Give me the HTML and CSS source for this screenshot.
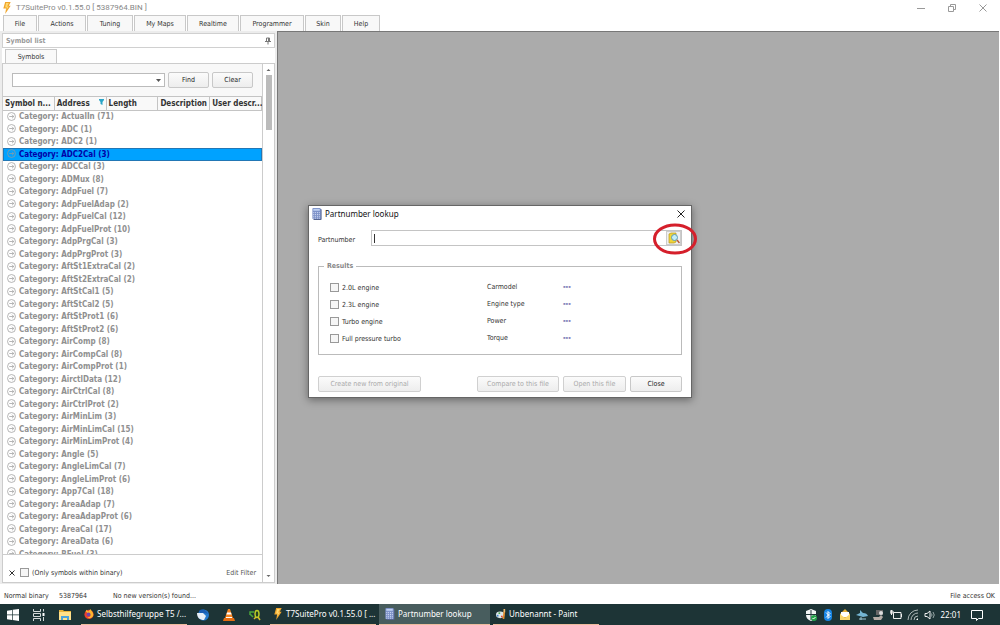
FILE: index.html
```
<!DOCTYPE html>
<html lang="en">
<head>
<meta charset="utf-8">
<title>T7SuitePro</title>
<link rel="stylesheet" href="styles.css">
</head>
<body>
<svg class="defs" aria-hidden="true">
  <symbol id="bolt" viewBox="0 0 10 13"><path d="M3 0h6L7 4h2L3 13l1-6H1z" fill="#f0a52c"/><path d="M4 1h3L5 5h2L4 9l1-3H3z" fill="#ffd970"/></symbol>
  <symbol id="calc" viewBox="0 0 10 13"><rect x="1" y="1" width="9" height="12" rx="1" fill="#55648f"/><rect width="9" height="12" rx="1" fill="#7d91c8"/><path d="M1 1h7v2H1z" fill="#bdd0f3"/><path d="M1 5h7M1 7h7M1 9h7M1 11h7" stroke="#dce5fa" stroke-dasharray="1 1"/></symbol>
</svg>
<div class="app">
  <header class="titlebar">
    <svg class="app-icon"><use href="#bolt"/></svg>
    <span class="title">T7SuitePro v0.1.55.0 [ 5387964.BIN ]</span>
    <div class="winbtns">
      <button aria-label="Minimize"><svg viewBox="0 0 10 10"><path d="M1 5.500h8"/></svg></button>
      <button aria-label="Restore"><svg viewBox="0 0 10 10"><path d="M1.500 3.500h5v5h-5zM3.500 3.500v-2h5v5h-2"/></svg></button>
      <button aria-label="Close window"><svg viewBox="0 0 10 10"><path d="M1.500 1.500l7 7M8.500 1.500l-7 7"/></svg></button>
    </div>
  </header>
  <nav class="menubar">
    <button class="m-file">File</button><button class="m-actions">Actions</button><button class="m-tuning">Tuning</button><button class="m-wide">My Maps</button><button class="m-wide">Realtime</button><button class="m-prog">Programmer</button><button class="m-skin">Skin</button><button class="m-help">Help</button>
  </nav>
  <main class="main">
    <aside class="panel">
      <div class="panel-head"><span>Symbol list</span><svg viewBox="0 0 6 8"><path d="M0 4.500h6M3 4.500v3M1.500 4v-3h3v3M3.500 1v3" fill="none" stroke="#777"/></svg></div>
      <div class="tabs"><button>Symbols</button></div>
      <div class="panel-body">
        <div class="content">
          <div class="search">
            <div class="combo"><input aria-label="Search symbols"><button aria-label="Show history"><svg viewBox="0 0 5 3"><path d="M0 0h5L2.500 3z" fill="#555"/></svg></button></div>
            <button class="btn">Find</button><button class="btn">Clear</button>
          </div>
          <div class="grid">
            <table>
              <thead><tr><th>Symbol n...</th><th>Address<svg class="funnel" viewBox="0 0 5 6"><path d="M0 0h5v1L3.500 3v3L1.500 5V3L0 1z" fill="#2aa5c8"/></svg></th><th>Length</th><th>Description</th><th>User descr...</th></tr></thead>
              <tbody>
                <tr><td colspan="5">Category: ActualIn (71)</td></tr>
                <tr><td colspan="5">Category: ADC (1)</td></tr>
                <tr><td colspan="5">Category: ADC2 (1)</td></tr>
                <tr class="selected"><td colspan="5">Category: ADC2Cal (3)</td></tr>
                <tr><td colspan="5">Category: ADCCal (3)</td></tr>
                <tr><td colspan="5">Category: ADMux (8)</td></tr>
                <tr><td colspan="5">Category: AdpFuel (7)</td></tr>
                <tr><td colspan="5">Category: AdpFuelAdap (2)</td></tr>
                <tr><td colspan="5">Category: AdpFuelCal (12)</td></tr>
                <tr><td colspan="5">Category: AdpFuelProt (10)</td></tr>
                <tr><td colspan="5">Category: AdpPrgCal (3)</td></tr>
                <tr><td colspan="5">Category: AdpPrgProt (3)</td></tr>
                <tr><td colspan="5">Category: AftSt1ExtraCal (2)</td></tr>
                <tr><td colspan="5">Category: AftSt2ExtraCal (2)</td></tr>
                <tr><td colspan="5">Category: AftStCal1 (5)</td></tr>
                <tr><td colspan="5">Category: AftStCal2 (5)</td></tr>
                <tr><td colspan="5">Category: AftStProt1 (6)</td></tr>
                <tr><td colspan="5">Category: AftStProt2 (6)</td></tr>
                <tr><td colspan="5">Category: AirComp (8)</td></tr>
                <tr><td colspan="5">Category: AirCompCal (8)</td></tr>
                <tr><td colspan="5">Category: AirCompProt (1)</td></tr>
                <tr><td colspan="5">Category: AirctlData (12)</td></tr>
                <tr><td colspan="5">Category: AirCtrlCal (8)</td></tr>
                <tr><td colspan="5">Category: AirCtrlProt (2)</td></tr>
                <tr><td colspan="5">Category: AirMinLim (3)</td></tr>
                <tr><td colspan="5">Category: AirMinLimCal (15)</td></tr>
                <tr><td colspan="5">Category: AirMinLimProt (4)</td></tr>
                <tr><td colspan="5">Category: Angle (5)</td></tr>
                <tr><td colspan="5">Category: AngleLimCal (7)</td></tr>
                <tr><td colspan="5">Category: AngleLimProt (6)</td></tr>
                <tr><td colspan="5">Category: App7Cal (18)</td></tr>
                <tr><td colspan="5">Category: AreaAdap (7)</td></tr>
                <tr><td colspan="5">Category: AreaAdapProt (6)</td></tr>
                <tr><td colspan="5">Category: AreaCal (17)</td></tr>
                <tr><td colspan="5">Category: AreaData (6)</td></tr>
                <tr><td colspan="5">Category: BFuel (3)</td></tr>
              </tbody>
            </table>
          </div>
          <div class="filter">
            <button class="plain" aria-label="Clear filter"><svg viewBox="0 0 6 6"><path d="M.5.5l5 5M5.500.5l-5 5" stroke="#333"/></svg></button>
            <label><input type="checkbox">(Only symbols within binary)</label>
            <button class="plain edit">Edit Filter</button>
          </div>
        </div>
        <div class="scroll"><svg viewBox="0 0 5 3"><path d="M.5 3h4L2.500 1z" fill="#666"/></svg><i></i><svg viewBox="0 0 5 3"><path d="M.5 0h4L2.500 2z" fill="#666"/></svg></div>
      </div>
    </aside>
    <section class="workspace"></section>
  </main>
  <footer class="status"><span class="bin">Normal binary</span><span class="num">5387964</span><span>No new version(s) found...</span><span class="access">File access OK</span></footer>
  <nav class="taskbar">
    <button class="ico" aria-label="Start"><svg viewBox="0 0 12 12"><path d="M0 1.700l5-.8v4.700H0zM5.700.8L12 0v5.600H5.700zM0 6.300h5V11l-5-.7zM5.700 6.300H12V12l-6.300-.9z" fill="#fff"/></svg></button>
    <button class="ico" aria-label="Task view"><svg viewBox="0 0 12 12"><path d="M.5 0v2.500h7V0M.5 4.500h7v3h-7zM.5 12V9.500h7V12M10.500 0v2.500M10.500 8v4" fill="none" stroke="#d5dada"/><path d="M9.500 4h2v3h-2z" fill="#fff"/></svg></button>
    <button class="ico" aria-label="Explorer"><svg viewBox="0 0 12 12"><path d="M0 1h4l1 1h7v9H0z" fill="#e8b33c"/><path d="M0 3h12v8H0z" fill="#ffe08a"/><path d="M2 11V7h8v4H8V9H4v2z" fill="#4ba3dc"/></svg></button>
    <button class="task firefox"><svg viewBox="0 0 12 12"><circle cx="6" cy="6.500" r="5.500" fill="#e9412f"/><path d="M2 3l1-2 2 2c2-2 2-2 3-3 0 2 4 4 3 8-1 3-5 4-7 2 4 0 5-3 2-4z" fill="#ffb52e"/><circle cx="5.500" cy="6.500" r="2.300" fill="#7444a8"/></svg><span>Selbsthilfegruppe T5 /...</span></button>
    <button class="ico" aria-label="Thunderbird"><svg viewBox="0 0 12 12"><circle cx="6.500" cy="6" r="5.500" fill="#2378cd"/><path d="M0 4l6 0 3 3-2 4c-4 0-7-2-7-7z" fill="#e6eef7"/><path d="M2 2c3-3 8-1 9 3L8 4 3 4z" fill="#1a5db3"/></svg></button>
    <button class="ico" aria-label="VLC"><svg viewBox="0 0 12 12"><path d="M5 0h2l3 9H2z" fill="#f58220"/><path d="M4 3.500h4l.6 2H3.400z" fill="#fff"/><path d="M1 9h10l1 3H0z" fill="#e56d11"/><path d="M3 8.500h6" stroke="#fff"/></svg></button>
    <button class="ico" aria-label="Search tool"><svg viewBox="0 0 12 12"><path d="M1 6V3h4M1 5l3 3" fill="none" stroke="#4aa53a" stroke-width="1.500"/><ellipse cx="8" cy="5" rx="2" ry="3.500" fill="#263f21" stroke="#b8ca27" stroke-width="1.500"/><path d="M5 10l2-2M9 8l2 3" stroke="#d5bf2b" stroke-width="1.500"/></svg></button>
    <button class="task suite"><svg><use href="#bolt"/></svg><span>T7SuitePro v0.1.55.0 [ ...</span></button>
    <button class="task active"><svg><use href="#calc"/></svg><span>Partnumber lookup</span></button>
    <button class="task"><svg viewBox="0 0 12 12"><ellipse cx="5" cy="7" rx="5" ry="4" fill="#dce6e9"/><path d="M1 7h2v2H1z" fill="#3a86cc"/><path d="M3 4h2v2H3z" fill="#46a450"/><path d="M6 8h2v2H6z" fill="#e2463a"/><path d="M9 3h2l-1 9H8z" fill="#e58b28"/><path d="M9 0h2v4H9z" fill="#f2bb70"/></svg><span>Unbenannt - Paint</span></button>
    <div class="tray">
      <svg viewBox="0 0 12 12"><path d="M1 2l5-2 5 2v4c0 3-2 5-5 6-3-1-5-3-5-6z" fill="#f2f5f5"/><path d="M6 1v10M1 5.500h10" stroke="#203738"/><circle cx="9" cy="9" r="3" fill="#23a34a"/><path d="M7.500 9l1 1 2-2" fill="none" stroke="#fff"/></svg>
      <svg viewBox="0 0 12 12"><rect x="2" width="8" height="12" rx="4" fill="#1685e5"/><path d="M4 3.500l4 4-2 2v-7l2 2-4 4" fill="none" stroke="#fff"/></svg>
      <svg viewBox="0 0 12 12"><path d="M1 5l5-5 5 5v6H1z" fill="#e4ae35"/><path d="M2 3h8v5H2z" fill="#fff"/><path d="M1 5l5 4 5-4v6H1z" fill="#f9d66b"/></svg>
      <svg viewBox="0 0 12 12"><path d="M0 6l4-2V1l3 3c3 0 4 1 5 3L7 8z" fill="#74b5d2"/><path d="M3 10h7M5 8v3" stroke="#9fc8d6"/></svg>
      <svg viewBox="0 0 12 12"><path d="M3 1h7v5H3z" fill="#666"/><circle cx="8" cy="4" r="2" fill="#ddd"/><path d="M0 8h6l2-2 2 2-2 3H1z" fill="#b5aca5"/></svg>
      <svg viewBox="0 0 12 12"><path d="M3.500 3.500H11v6H3.500zM11.500 5v3M1.500 1v5M0 2h3v2H0z" fill="none" stroke="#eee"/></svg>
      <svg viewBox="0 0 12 12"><path d="M1 11A10 10 0 0111 1M4 11a7 7 0 017-7M7 11a4 4 0 014-4" fill="none" stroke="#aeb8b8"/><path d="M9 11l2-2v2z" fill="#fff"/></svg>
      <svg viewBox="0 0 12 12"><path d="M1 4.500h2L6 2v8L3 7.500H1z" fill="none" stroke="#eee"/><path d="M7.500 4.500q1 1.500 0 3M9 3q2.500 3 0 6" fill="none" stroke="#99a8a8"/></svg>
      <time>22:01</time>
      <svg class="note" viewBox="0 0 12 12"><path d="M.5 1.500h11v8h-4l-2 2v-2h-5z" fill="none" stroke="#fff"/></svg>
    </div>
  </nav>
  <div class="dialog" role="dialog" aria-labelledby="dlg">
    <div class="dlg-head"><svg class="calc"><use href="#calc"/></svg><h1 id="dlg">Partnumber lookup</h1><button class="plain" aria-label="Close dialog"><svg viewBox="0 0 8 8"><path d="M.5.5l7 7M7.500.5l-7 7" stroke="#222"/></svg></button></div>
    <div class="dlg-body">
      <div class="field"><label for="part">Partnumber</label>
        <div class="entry"><i class="caret"></i><input id="part">
          <button class="look" aria-label="Look up"><svg viewBox="0 0 12 12"><path d="M1 2l2-1h5v9l-2 1H1z" fill="#f0d43a" stroke="#b8981c" stroke-width=".7"/><circle cx="6.500" cy="5.500" r="3" fill="#c3edf7" stroke="#5c9bb2"/><path d="M9 8l2.500 3" stroke="#ba5a3b" stroke-width="1.500"/></svg></button>
          <svg class="ring" viewBox="0 0 46 34"><ellipse cx="23" cy="17" rx="20.500" ry="14" fill="none" stroke="#d51f2b" stroke-width="3"/></svg>
        </div>
      </div>
      <fieldset><legend>Results</legend>
        <div class="results">
          <div class="checks"><label><input type="checkbox">2.0L engine</label><label><input type="checkbox">2.3L engine</label><label><input type="checkbox">Turbo engine</label><label><input type="checkbox">Full pressure turbo</label></div>
          <dl><dt>Carmodel</dt><dd>---</dd><dt>Engine type</dt><dd>---</dd><dt>Power</dt><dd>---</dd><dt>Torque</dt><dd>---</dd></dl>
        </div>
      </fieldset>
      <div class="actions"><button class="btn create" disabled>Create new from original</button><button class="btn compare" disabled>Compare to this file</button><button class="btn open" disabled>Open this file</button><button class="btn close">Close</button></div>
    </div>
  </div>
</div>
</body>
</html>
```
FILE: styles.css
```
* { box-sizing: border-box; }
body { margin: 0; background: #fff; color: #333; font: 7px/12px "DejaVu Sans Condensed", "DejaVu Sans", sans-serif; }
button, input { font: inherit; color: inherit; padding: 0; border: 0; background: none; }
input { min-width: 0; outline: 0; }
svg { flex: none; }
.defs { display: none; }
.app { position: relative; display: flex; flex-direction: column; height: 100vh; overflow: hidden; }

.titlebar { display: flex; align-items: center; height: 15px; padding: 0 12px 0 2px; color: #888; font: 8px/15px Roboto, sans-serif; }
.app-icon { width: 10px; height: 12px; margin-right: 4px; }
.winbtns { display: flex; gap: 21px; margin-left: auto; }
.winbtns button { display: flex; }
.winbtns svg { width: 10px; height: 10px; fill: none; stroke: #999; }

.menubar { display: flex; height: 16px; padding: 0 3px; gap: 1px; }
.menubar button { border: 1px solid #c8c8c8; border-bottom: 0; background: #f8f8f8; }
.m-file { width: 34px; }
.m-actions { width: 48px; }
.m-tuning { width: 46px; }
.m-wide { width: 52px; }
.m-prog { width: 64px; }
.m-skin { width: 36px; }
.m-help { width: 38px; }

.main { display: flex; flex: 1; min-height: 0; padding-right: 1px; }
.workspace { flex: 1; background: #ababab; border: solid #777; border-width: 1px 0 0 1px; }
.panel { display: flex; flex-direction: column; width: 277px; padding: 2px 2px 1px; background: #ececec; }
.panel-head { display: flex; justify-content: space-between; align-items: center; height: 15px; padding: 0 3px; border: 1px solid #d0d0d0; background: #fff; color: #999; }
.panel-head svg { width: 6px; height: 8px; }
.panel-head, table, legend { font-weight: bold; }
.tabs { height: 15px; padding: 1px 3px 0; background: #fff; }
.tabs button { display: block; width: 52px; height: 14px; border: 1px solid #c8c8c8; border-bottom: 0; background: #f9f9f9; }
.panel-body { display: flex; flex: 1; min-height: 0; border: 1px solid #ccc; background: #fff; }
.content { display: flex; flex-direction: column; flex: 1; min-width: 0; border-right: 1px solid #ccc; }
.search { display: flex; gap: 3px; height: 32px; padding: 8px 9px; background: #f8f8f8; }
.search .btn { width: 41px; }
.combo { display: flex; flex: 1; height: 14px; margin-top: 1px; border: 1px solid #bbb; background: #fff; }
.combo input { flex: 1; }
.combo button { display: flex; align-items: center; width: 8px; }
.combo button svg { width: 5px; height: 3px; }
.btn { height: 16px; border: 1px solid #c8c8c8; border-radius: 2px; background: linear-gradient(#fbfbfb, #ededed); color: #222; }
.btn:disabled { color: #aaa; border-color: #d0d0d0; }

.grid { flex: 1; min-height: 0; overflow: hidden; }
table { width: 100%; table-layout: fixed; border-spacing: 0; font-size: 8px; }
th { height: 15px; padding: 0 0 0 2px; border: solid #c4c4c4; border-width: 1px 1px 1px 0; background: #f9f9f9; color: #333; text-align: left; white-space: nowrap; line-height: 12px; }
.funnel { float: right; width: 5px; height: 6px; margin: 1px 2px 0; }
td { height: 12px; padding: 0 0 0 16px; line-height: 10px; color: #909090; background: url("data:image/svg+xml,%3Csvg xmlns='http://www.w3.org/2000/svg' viewBox='0 0 10 10' fill='none' stroke='%23999'%3E%3Ccircle cx='5' cy='5' r='4.400' stroke-width='.8'/%3E%3Cpath d='M2.500 5h5M5.500 3l2 2-2 2' stroke-width='.8'/%3E%3C/svg%3E") 4px 1px / 9px 9px no-repeat; }
tr:nth-child(even) td { height: 13px; }
.selected td { border: 1px solid #2277b5; padding-left: 15px; background-color: #00a2ff; background-position: 3px 0; color: #0000a8; }
.filter { display: flex; align-items: center; height: 28px; padding: 8px 6px 0; border-top: 1px solid #ccc; }
.filter label { margin-left: 5px; }
label { display: flex; align-items: center; gap: 3px; white-space: nowrap; }
input[type="checkbox"] { appearance: none; width: 9px; height: 9px; margin: 0; border: 1px solid #999; background: #f6f6f6; }
.plain { display: flex; }
.plain svg { width: 6px; height: 6px; }
.edit { margin-left: auto; color: #555; }
.scroll { display: flex; flex-direction: column; align-items: center; width: 11px; padding: 4px 0; }
.scroll svg { width: 5px; height: 3px; }
.scroll i { width: 6px; height: 55px; margin: 4px 0 auto; background: #bbb; }

.status { display: flex; align-items: center; height: 20px; padding: 3px 5px 0 4px; }
.bin { width: 55px; }
.num { width: 54px; }
.access { margin-left: auto; }

.taskbar { display: flex; height: 21px; background: #1d3436; color: #fff; font: 8px/20px "Noto Sans", sans-serif; }
.ico { display: flex; justify-content: center; align-items: center; width: 26px; }
.ico svg { width: 12px; height: 12px; }
.task { display: flex; align-items: center; gap: 3px; width: 106px; margin-right: 3px; padding: 0 3px; border-bottom: 1px solid #eebc9e; white-space: nowrap; }
.task svg { width: 10px; height: 12px; }
.task.firefox { margin-left: 3px; }
.task.suite { margin-left: 2px; }
.task.active { width: 111px; padding: 0 6px; background: #485d5e; }
.tray { display: flex; align-items: center; gap: 5px; margin-left: auto; padding-right: 17px; }
.tray svg { width: 12px; height: 12px; }
.tray .note { margin-left: 5px; }

.dialog { position: absolute; left: calc(50% - 192px); top: 205px; width: 384px; border: 1px solid #666; background: #fff; box-shadow: 0 2px 8px rgba(0, 0, 0, .4); }
.dlg-head { display: flex; align-items: center; height: 16px; padding: 0 6px 0 3px; color: #111; }
.calc { width: 10px; height: 12px; }
h1 { flex: 1; margin: 0 0 0 3px; font: 8px/16px "Noto Sans", sans-serif; }
.dlg-head button svg { width: 8px; height: 8px; }
.dlg-body { padding: 8px 9px 5px; }
.field { display: flex; align-items: center; }
.field label { width: 53px; padding-top: 4px; }
.entry { position: relative; display: flex; flex: 1; height: 16px; border: 1px solid #c4c4c4; }
.caret { width: 1px; height: 9px; margin: 3px 0 0 2px; background: #333; }
.entry input { flex: 1; }
.look { display: flex; align-items: center; justify-content: center; width: 15px; border: 1px solid #ccc; background: #f0f0f0; }
.look svg { width: 12px; height: 12px; }
.ring { position: absolute; right: -17px; top: -9px; width: 46px; height: 34px; pointer-events: none; }
fieldset { margin: 14px 0 21px; padding: 7px 11px; border: 1px solid #bbb; min-width: 0; }
legend { margin-left: -6px; padding: 0 3px; color: #888; }
.results { display: flex; }
.checks { width: 157px; }
.checks label { height: 17px; }
dl { display: grid; grid-template-columns: 76px 1fr; grid-auto-rows: 17px; margin: 0; line-height: 17px; }
dd { margin: 0; color: #228; font-weight: bold; }
.actions { display: flex; gap: 4px; }
.create { width: 103px; margin-right: auto; }
.compare { width: 82px; }
.open { width: 63px; }
.close { width: 52px; }
```
